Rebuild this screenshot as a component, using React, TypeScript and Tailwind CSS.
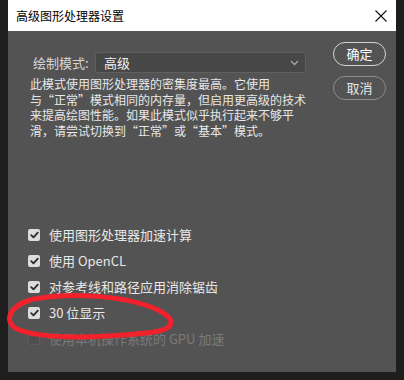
import React from "react";

const font = { fontFamily: '"Noto Sans CJK SC", "Noto Sans", sans-serif' };

function Check({ disabled }: { disabled?: boolean }) {
  if (disabled) {
    return (
      <div className="w-[12px] h-[12px] rounded-[2px] bg-[#4e4e4e] border border-[#5c5c5c] shrink-0" />
    );
  }
  return (
    <div className="w-[12px] h-[12px] rounded-[2px] bg-[#dcdcdc] flex items-center justify-center shrink-0">
      <svg width="9" height="8" viewBox="0 0 9 8">
        <path d="M1.2 4.2 L3.5 6.4 L7.8 1.6" stroke="#2c2c2c" strokeWidth="1.8" fill="none" strokeLinecap="round" strokeLinejoin="round" />
      </svg>
    </div>
  );
}

function Row({ children, disabled }: { children: React.ReactNode; disabled?: boolean }) {
  return (
    <div className="h-[26px] flex items-center">
      <Check disabled={disabled} />
      <span className={`ml-[9px] text-[13px] leading-[16px] whitespace-nowrap ${disabled ? "text-[#7a7a7a]" : "text-[#e8e8e8]"}`}>
        {children}
      </span>
    </div>
  );
}

export default function App() {
  return (
    <div className="relative w-[404px] h-[380px] bg-[#1e1e1e] pl-[8px] pr-[8px] pb-[8px]" style={font}>
      <div className="w-[388px] h-[372px] flex flex-col">
        <div className="h-[31px] bg-white flex items-center justify-between pl-[8px] pr-[9px] shrink-0">
          <span className="text-[12px] leading-[14px] text-black">高级图形处理器设置</span>
          <svg width="12" height="12" viewBox="0 0 12 12">
            <path d="M0.5 0.5 L11.5 11.5 M11.5 0.5 L0.5 11.5" stroke="#111" strokeWidth="1.1" />
          </svg>
        </div>
        <div className="flex-1 bg-[#535353] flex">
          <div className="flex-1 pl-[20px]">
            <div className="flex items-center mt-[21px]">
              <span className="ml-[5px] w-[62px] text-[13px] leading-[16px] text-[#d6d6d6]">绘制模式:</span>
              <div className="w-[211px] h-[21px] rounded-[3px] border border-[#606060] bg-[#474747] flex items-center justify-between pl-[8px] pr-[6px]">
                <span className="text-[13px] leading-[16px] text-[#f0f0f0]">高级</span>
                <svg width="9" height="6" viewBox="0 0 9 6">
                  <path d="M1 1 L4.5 4.5 L8 1" stroke="#a8a8a8" strokeWidth="1.3" fill="none" />
                </svg>
              </div>
            </div>
            <div className="mt-[3px] ml-[2px] text-[12px] leading-[15.6px] text-[#e8e8e8] whitespace-nowrap">
              <div>此模式使用图形处理器的密集度最高。它使用</div>
              <div>与“正常”模式相同的内存量，但启用更高级的技术</div>
              <div>来提高绘图性能。如果此模式似乎执行起来不够平</div>
              <div>滑，请尝试切换到“正常”或“基本”模式。</div>
            </div>
            <div className="mt-[84px]">
              <Row>使用图形处理器加速计算</Row>
              <Row>使用 OpenCL</Row>
              <Row>对参考线和路径应用消除锯齿</Row>
              <Row>30 位显示</Row>
              <Row disabled>使用本机操作系统的 GPU 加速</Row>
            </div>
          </div>
          <div className="w-[63px] pt-[11px] flex flex-col gap-[10px]">
            <button className="w-[53px] h-[24px] rounded-full border-[1.5px] border-[#d4d4d4] text-[13px] leading-[16px] text-white">确定</button>
            <button className="w-[53px] h-[24px] rounded-full border border-[#8c8c8c] text-[13px] leading-[16px] text-[#e6e6e6]">取消</button>
          </div>
        </div>
      </div>
      <svg className="absolute left-0 top-0 pointer-events-none" width="404" height="380" viewBox="0 0 404 380">
        <path
          d="M34 299 C 75 292, 128 296, 158 310 C 176 319, 178 330, 146 333 C 105 337, 45 341, 17 329 C 4 322, 8 307, 30 300"
          stroke="#f2212b"
          strokeWidth="5"
          fill="none"
          strokeLinecap="round"
        />
      </svg>
    </div>
  );
}
